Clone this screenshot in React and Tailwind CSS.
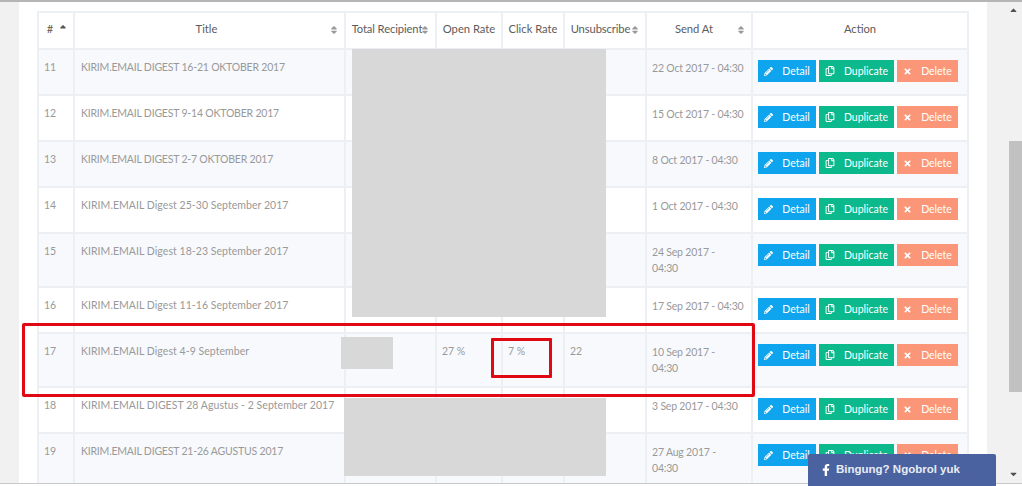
import { FaSort, FaSortUp, FaPencilAlt, FaRegCopy, FaTimes, FaFacebookF, FaCaretUp, FaCaretDown } from 'react-icons/fa';

const ROWS = [
  { no: 11, title: 'KIRIM.EMAIL DIGEST 16-21 OKTOBER 2017', date: '22 Oct 2017 - 04:30' },
  { no: 12, title: 'KIRIM.EMAIL DIGEST 9-14 OKTOBER 2017', date: '15 Oct 2017 - 04:30' },
  { no: 13, title: 'KIRIM.EMAIL DIGEST 2-7 OKTOBER 2017', date: '8 Oct 2017 - 04:30' },
  { no: 14, title: 'KIRIM.EMAIL Digest 25-30 September 2017', date: '1 Oct 2017 - 04:30', wide: true },
  { no: 15, title: 'KIRIM.EMAIL Digest 18-23 September 2017', date: '24 Sep 2017 -\n04:30', wide: true },
  { no: 16, title: 'KIRIM.EMAIL Digest 11-16 September 2017', date: '17 Sep 2017 - 04:30', wide: true },
  { no: 17, title: 'KIRIM.EMAIL Digest 4-9 September', date: '10 Sep 2017 -\n04:30', open: '27 %', click: '7 %', unsub: '22', wide: true },
  { no: 18, title: 'KIRIM.EMAIL DIGEST 28 Agustus - 2 September 2017', date: '3 Sep 2017 - 04:30', wide: true },
  { no: 19, title: 'KIRIM.EMAIL DIGEST 21-26 AGUSTUS 2017', date: '27 Aug 2017 -\n04:30' },
];

const HEADERS = [
  { label: '#', icon: 'up', shift: 'mr-[12px]' },
  { label: 'Title', icon: 'sort', shift: 'mr-[6px]' },
  { label: 'Total Recipient', icon: 'sort', shift: 'mr-[7px] tracking-[-0.1px]' },
  { label: 'Open Rate' },
  { label: 'Click Rate' },
  { label: 'Unsubscribe', icon: 'sort', shift: 'mr-[9px] tracking-[-0.1px]' },
  { label: 'Send At', icon: 'sort', shift: 'mr-[10px]' },
  { label: 'Action' },
];

const cell = 'border-2 border-[#eceff4] align-top pt-[10px] pb-[10px] px-[5px] whitespace-nowrap';

function ActionButton({ color, icon, label, width }) {
  return (
    <button className={`flex h-[22px] items-center justify-center gap-[9px] text-[10.5px] text-white ${color} ${width}`}>
      {icon}
      {label}
    </button>
  );
}

export default function App() {
  return (
    <div className="flex h-[486px] w-[1022px] flex-col overflow-hidden bg-[#f1f1f1] font-['Lato',sans-serif]">
      <div className="h-[2px] shrink-0 bg-[#b5b5b5]" />
      <div className="flex min-h-0 flex-1">
        <div className="w-[19px] shrink-0" />

        {/* Main card */}
        <div className="relative w-[968px] shrink-0 overflow-hidden bg-white pl-[18px] pt-[9px]">
          <table className="w-[930px] table-fixed border-collapse text-[10.5px] leading-[15px] text-[#999999]">
            <colgroup>
              <col className="w-[36px]" />
              <col className="w-[271px]" />
              <col className="w-[91px]" />
              <col className="w-[66px]" />
              <col className="w-[62px]" />
              <col className="w-[82px]" />
              <col className="w-[106px]" />
              <col className="w-[216px]" />
            </colgroup>
            <thead>
              <tr className="h-[37px] bg-white text-[11.2px] text-[#5c5c5c]">
                {HEADERS.map((h) => (
                  <th key={h.label} className="relative border-2 border-[#eceff4] pb-[4px] font-normal">
                    <span className={h.shift}>{h.label}</span>
                    {h.icon === 'sort' && <FaSort className="absolute right-[5px] top-[12px] text-[10px] text-[#9a9a9a]" />}
                    {h.icon === 'up' && <FaSortUp className="absolute right-[5px] top-[11px] text-[10px] text-[#555555]" />}
                  </th>
                ))}
              </tr>
            </thead>
            <tbody>
              {ROWS.map((r, i) => (
                <tr key={r.no} className={i % 2 === 0 ? 'bg-[#f7f9fd]' : 'bg-white'}>
                  <td className={cell}>{r.no}</td>
                  <td className={`${cell} pl-[6px] ${r.wide ? 'tracking-[0.05px]' : 'tracking-[-0.2px]'}`}>{r.title}</td>
                  <td className={cell} />
                  <td className={cell}>{r.open}</td>
                  <td className={cell}>{r.click}</td>
                  <td className={cell}>{r.unsub}</td>
                  <td className={`${cell} whitespace-pre leading-[16px] tracking-[-0.2px]`}>{r.date}</td>
                  <td className={`${cell} pb-[12px]`}>
                    <div className="flex gap-[3px]">
                      <ActionButton color="bg-[#0ea5ee]" width="w-[58px]" label="Detail" icon={<FaPencilAlt className="text-[9px]" />} />
                      <ActionButton color="bg-[#0cb98c]" width="w-[75px]" label="Duplicate" icon={<FaRegCopy className="text-[10px]" />} />
                      <ActionButton color="bg-[#fb9678]" width="w-[61px]" label="Delete" icon={<FaTimes className="text-[9px]" />} />
                    </div>
                  </td>
                </tr>
              ))}
            </tbody>
          </table>

          {/* Redacted areas */}
          <div className="absolute left-[333px] top-[47px] h-[268px] w-[254px] bg-[#d8d8d8]" />
          <div className="absolute left-[322px] top-[335px] h-[32px] w-[52px] bg-[#d8d8d8]" />
          <div className="absolute left-[325px] top-[396px] h-[78px] w-[262px] bg-[#d8d8d8]" />

          {/* Annotations */}
          <div className="absolute left-[3px] top-[321px] h-[74px] w-[733px] rounded-[2px] border-[3px] border-[#e00812]" />
          <div className="absolute left-[472px] top-[336px] h-[40px] w-[61px] rounded-[1px] border-[3px] border-[#e00812]" />
        </div>

        <div className="w-[17px] shrink-0" />

        {/* Scrollbar */}
        <div className="flex w-[18px] shrink-0 flex-col items-end">
          <FaCaretUp className="mr-[3px] mt-[3px] h-[10px] w-[11px] text-[#505050]" />
          <div className="mt-[126px] h-[251px] w-[13px] bg-[#c1c1c1]" />
          <FaCaretDown className="mr-[3px] mt-[77px] h-[10px] w-[11px] text-[#505050]" />
        </div>
      </div>
      <div className="h-[3px] shrink-0 border-t border-[#c8c8c8] bg-white" />

      {/* Chat widget */}
      <div className="absolute left-[808px] top-[454px] flex h-[32px] w-[188px] items-center rounded-t-[2px] bg-[#4a63a0] pl-[12px] font-['Liberation_Sans',sans-serif] text-[11.5px] font-bold text-[#e8ecf5]">
        <FaFacebookF className="mr-[4px] text-[12px] text-white" />
        Bingung? Ngobrol yuk
      </div>
    </div>
  );
}
